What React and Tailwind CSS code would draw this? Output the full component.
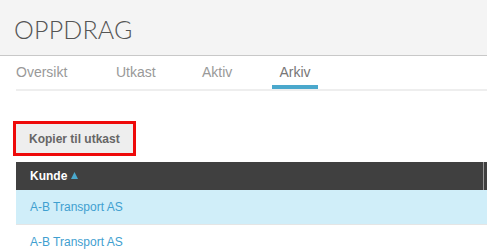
import React from 'react';

const tabs = ['Oversikt', 'Utkast', 'Aktiv', 'Arkiv'];
const rows = ['A-B Transport AS', 'A-B Transport AS'];

const App = () => {
  return (
    <div className="w-[487px] h-[251px] overflow-hidden bg-white font-['Liberation_Sans',Arial,sans-serif]">
      {/* Header */}
      <div className="h-[56px] bg-[#f4f4f4] border-b border-[#c8c8c8] flex items-center pl-[14px]">
        <h1 className="text-[25px] font-light text-[#555] tracking-[0.2px] font-['Lato',sans-serif] pt-[4px]">
          OPPDRAG
        </h1>
      </div>

      {/* Tabs */}
      <div className="ml-[16px] border-b-2 border-[#eeeeee] flex h-[35px]">
        {tabs.map((tab, idx) => (
          <div
            key={tab}
            className={`relative h-full pt-[8px] text-[14px] leading-[16px] ${
              idx === 3 ? 'text-[#777] w-[46px] text-center' : 'text-[#999]'
            } ${idx === 0 ? 'w-[100px]' : idx === 1 ? 'w-[86px]' : idx === 2 ? 'w-[70px]' : ''}`}
          >
            {tab}
            {idx === 3 && <div className="absolute left-0 right-0 bottom-0 h-[4px] bg-[#4aa8cc]" />}
          </div>
        ))}
      </div>

      {/* Action */}
      <div className="pl-[13px] pt-[30px]">
        <div className="inline-block border-[3px] border-[#ee0a0a]">
          <button className="bg-[#eeeeee] text-[#666] text-[12px] font-bold px-[13px] h-[29px]">
            Kopier til utkast
          </button>
        </div>
      </div>

      {/* Table */}
      <div className="ml-[16px] mt-[6px] w-[471px]">
        <div className="h-[28px] bg-[#404040] flex items-center pl-[14px] text-[12px] font-bold text-white">
          <span>Kunde</span>
          <svg className="ml-[4px] mb-[1px]" width="7" height="7" viewBox="0 0 7 7">
            <polygon points="3.5,0 7,7 0,7" fill="#4aa8cc" />
          </svg>
          <div className="ml-auto mr-[3px] w-[1px] h-full bg-[#999]" />
        </div>
        {rows.map((row, idx) => (
          <div
            key={idx}
            className={`h-[35px] flex items-center pl-[14px] text-[12px] text-[#3fa0d0] border-b border-[#e5e5e5] ${
              idx === 0 ? 'bg-[#d0eef9]' : 'bg-white'
            }`}
          >
            {row}
          </div>
        ))}
      </div>
    </div>
  );
};

export default App;
